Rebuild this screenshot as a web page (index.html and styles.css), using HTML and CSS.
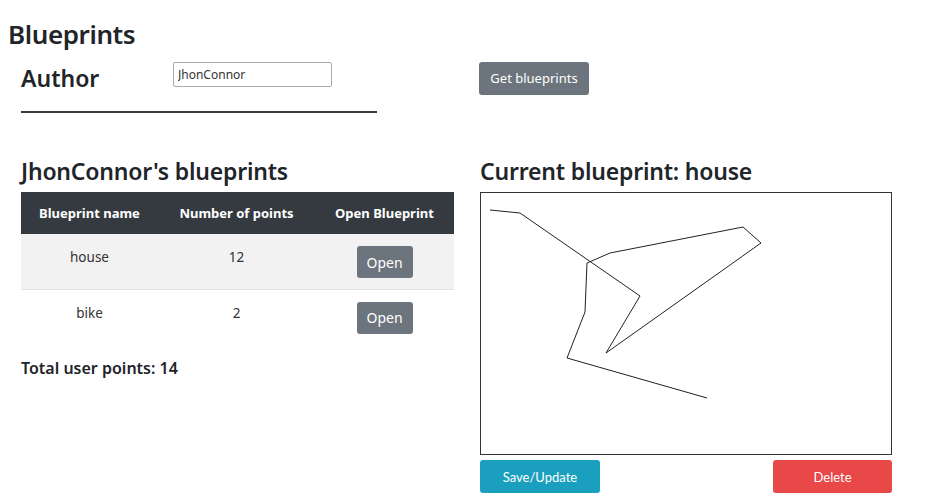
FILE: index.html
```html
<!DOCTYPE html>
<html>
<head>
<meta charset="utf-8">
<link rel="stylesheet" href="styles.css">
</head>
<body>
<h1 class="title">Blueprints</h1>
<div class="author-row">
  <h2 class="author-label">Author</h2>
  <input class="author-input" type="text" value="JhonConnor">
  <button class="btn btn-gray btn-get">Get blueprints</button>
</div>
<hr class="divider">
<div class="main">
  <section class="left">
    <h3 class="sub">JhonConnor's blueprints</h3>
    <table class="bp-table">
      <thead>
        <tr><th>Blueprint name</th><th>Number of points</th><th>Open Blueprint</th></tr>
      </thead>
      <tbody>
        <tr class="striped"><td>house</td><td>12</td><td><button class="btn btn-gray btn-open">Open</button></td></tr>
        <tr><td>bike</td><td>2</td><td><button class="btn btn-gray btn-open">Open</button></td></tr>
      </tbody>
    </table>
    <p class="total">Total user points: 14</p>
  </section>
  <section class="right">
    <h3 class="sub">Current blueprint: house</h3>
    <div class="canvas">
      <svg width="410" height="261" viewBox="0 0 410 261">
        <polyline fill="none" stroke="#222" stroke-width="1" points="9,17 39,20 159,103 125,160 280,50 262,34 129,60 106,70 104,119 86,165 226,205"/>
      </svg>
    </div>
    <div class="actions">
      <button class="btn btn-save">Save/Update</button>
      <button class="btn btn-delete">Delete</button>
    </div>
  </section>
</div>
</body>
</html>
```
FILE: styles.css
```css
body {
  margin: 8px;
  font-family: "Noto Sans", "Open Sans", sans-serif;
  color: #212529;
  background: #fff;
}
.title {
  margin: 0;
  padding-top: 10px;
  font-size: 26px;
  font-weight: 600;
  line-height: 32px;
  letter-spacing: -0.4px;
}
.author-row {
  display: grid;
  grid-template-columns: 152px 306px auto;
  align-items: center;
  padding-left: 13px;
  margin-top: 10px;
  height: 36px;
}
.author-label {
  margin: 0;
  font-size: 23px;
  font-weight: 600;
  line-height: 30px;
}
.author-input {
  width: 159px;
  height: 25px;
  box-sizing: border-box;
  border: 1px solid #aaa;
  border-radius: 2px;
  padding: 1px 4px;
  font-family: "Noto Sans", sans-serif;
  font-size: 12px;
  color: #333;
  align-self: start;
  margin-top: 2px;
}
.btn {
  border: none;
  color: #fff;
  border-radius: 3px;
  cursor: pointer;
}
.btn-gray {
  background: #6c757d;
}
.btn-get {
  width: 110px;
  height: 33px;
  font-family: "Noto Sans", sans-serif;
  font-size: 13px;
  justify-self: start;
}
.divider {
  margin: 15px 0 0 13px;
  width: 356px;
  border: none;
  border-top: 2px solid #3a3a3a;
  height: 0;
}
.main {
  display: grid;
  grid-template-columns: 433px 412px;
  column-gap: 26px;
  padding-left: 13px;
  margin-top: 43px;
}
.sub {
  margin: 0 0 6px 0;
  font-size: 23px;
  font-weight: 600;
  line-height: 30px;
  letter-spacing: -0.2px;
}
.bp-table {
  width: 433px;
  border-collapse: collapse;
}
.bp-table th {
  background: #343a40;
  color: #fff;
  font-size: 13px;
  font-weight: 700;
  height: 42px;
  padding: 0;
}
.bp-table td {
  height: 55px;
  text-align: center;
  font-size: 13.5px;
  color: #333;
  padding: 0;
  vertical-align: top;
  padding-top: 14px;
  box-sizing: border-box;
}
.bp-table th:nth-child(1) { width: 137px; }
.bp-table th:nth-child(2) { width: 157px; }
.bp-table tbody tr.striped { background: #f2f2f2; }
.bp-table tbody tr.striped td { border-bottom: 1px solid #e2e2e2; }
.bp-table td:nth-child(3) { padding-top: 12px; }
.btn-open {
  width: 56px;
  height: 32px;
  font-family: "Noto Sans", sans-serif;
  font-size: 14px;
}
.total {
  margin: 13px 0 0 0;
  font-size: 16px;
  font-weight: 600;
}
.canvas {
  width: 412px;
  height: 263px;
  box-sizing: border-box;
  border: 1px solid #333;
  background: #fff;
}
.canvas svg { display: block; }
.actions {
  display: flex;
  justify-content: space-between;
  margin-top: 5px;
}
.btn-save, .btn-delete {
  height: 33px;
  font-family: Lato, sans-serif;
  font-size: 13px;
  width: 120px;
}
.btn-save { background: #1a9fbe; }
.btn-delete { background: #e84848; width: 119px; }
```
